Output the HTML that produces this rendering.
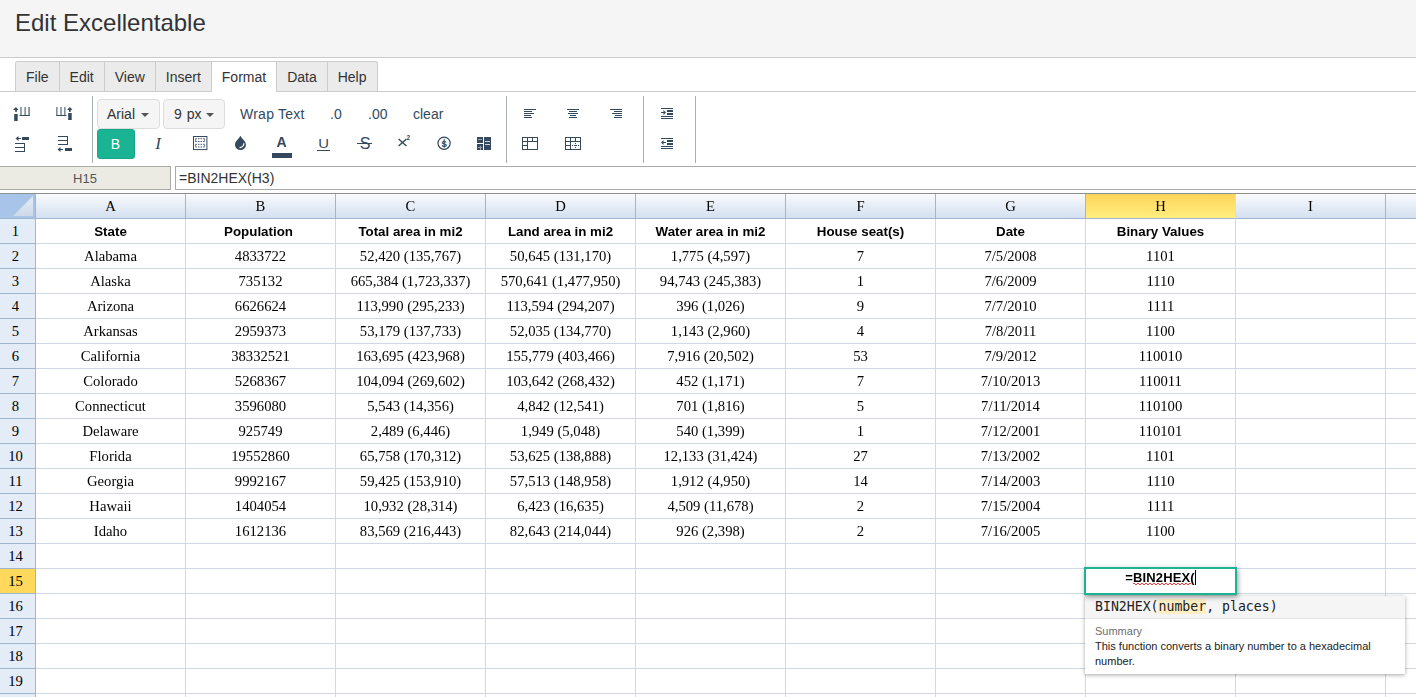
<!DOCTYPE html>
<html><head><meta charset="utf-8"><title>Edit Excellentable</title>
<style>
*{box-sizing:border-box;margin:0;padding:0}
html,body{width:1416px;height:697px;overflow:hidden;background:#fff}
body{font-family:"Liberation Sans",Arial,sans-serif;font-size:14px;color:#333;position:relative}
.abs{position:absolute}
#hdr{position:absolute;left:0;top:0;width:1416px;height:58px;background:#f5f5f5;border-bottom:1px solid #ccc}
#hdr h1{position:absolute;left:15px;top:9px;font-size:24px;font-weight:normal;line-height:28px;color:#333}
#tabs{position:absolute;left:15px;top:61px;height:30px;display:flex;border-top:1px solid #ccc;border-right:1px solid #ccc;border-radius:3px 3px 0 0;background:#ebebeb;overflow:hidden}
#tabs div{height:30px;line-height:30px;padding:0 10px;border-left:1px solid #ccc;font-size:14px;color:#333;white-space:nowrap}
#tabs div.act{background:#fff;height:31px}
#tbline{position:absolute;left:0;top:91px;width:1416px;height:1px;background:#ccc}
.sep{position:absolute;top:96px;width:1px;height:67px;background:#a9aeb5}
.btn{position:absolute;height:30px;border:1px solid #ddd;border-radius:4px;background:#f5f5f5;font-size:14px;line-height:27px;color:#333}
.caret{position:absolute;width:0;height:0;border-left:4px solid transparent;border-right:4px solid transparent;border-top:4px solid #555}
.tt{position:absolute;font-size:14px;line-height:16px;color:#34495e;white-space:nowrap}
svg.ic{position:absolute;overflow:visible}
#namebox{position:absolute;left:-1px;top:166px;width:172px;height:24px;background:#ebebe4;border:1px solid #aaa;font-size:13px;line-height:24px;text-align:center;color:#555}
#fx{position:absolute;left:175px;top:166px;width:1260px;height:24px;background:#fff;border:1px solid #aaa;font-size:14px;line-height:22px;padding-left:3px;color:#333}
/* grid */
#grid{position:absolute;left:0;top:193px;width:1416px;height:504px;overflow:hidden;opacity:.999;font-family:"Liberation Serif","Times New Roman",serif}
#gtop{position:absolute;left:0;top:193px;width:1416px;height:1px;background:#8e8e8e}
.corner{position:absolute;left:0;top:194px;width:36px;height:25px;background:#a9c4e9;border-right:1px solid #9eb6ce;border-bottom:1px solid #9eb6ce}
.ch{position:absolute;top:194px;width:150px;height:25px;border-right:1px solid #9eb6ce;border-bottom:1px solid #9eb6ce;background:linear-gradient(#f9fbfd,#d4dff0);font-size:14.67px;line-height:24px;text-align:center;color:#000}
.ch.sel{background:linear-gradient(#ffd45c,#ffee80);border-right-color:#e6dfba}
.rh{position:absolute;left:0;width:36px;height:25px;border-right:1px solid #9eb6ce;border-bottom:1px solid #9eb6ce;background:#e4ecf7;font-size:14.67px;line-height:24px;text-align:center;color:#000;padding-right:4px}
.rh.sel{background:#ffd85c}
.hl{position:absolute;left:36px;width:1380px;height:1px;background:#d0d7e5}
.vl{position:absolute;top:219px;width:1px;height:500px;background:#d0d7e5}
.c{position:absolute;width:149px;height:24px;font-size:14.67px;line-height:24px;text-align:center;color:#000;white-space:nowrap}
.c.b{font-family:"Liberation Sans",Arial,sans-serif;font-weight:bold;font-size:13.33px;line-height:26px}
#edit{z-index:5;position:absolute;left:1084px;top:567px;width:153px;height:28px;border:2px solid #1ab394;background:#fff;box-shadow:1px 2px 5px rgba(0,0,0,.4);font-family:"Liberation Sans",Arial,sans-serif;font-weight:bold;font-size:13px;line-height:18px;text-align:center;color:#000}
#tipsh{position:absolute;left:1085px;top:596px;width:320px;height:78px;box-shadow:0 1px 4px rgba(0,0,0,.35)}
#tip{position:absolute;left:1085px;top:596px;width:320px;height:78px;background:#fff;font-family:"Liberation Sans",Arial,sans-serif}
#tip .sig{height:23px;background:#f5f5f5;border-bottom:1px solid #e5e5e5;font-family:"DejaVu Sans Mono","Liberation Mono",monospace;font-size:13.200px;line-height:22px;padding-left:10px;color:#222;white-space:pre;position:relative}
#tip .sig i{position:absolute;left:73px;top:3px;width:48px;height:15px;background:#fdefc3}
#tip .sig b{position:relative;font-weight:normal}
#tip .sum{position:absolute;left:10px;top:28px;font-size:11px;line-height:14px;color:#6e6e6e}
#tip .desc{position:absolute;left:10px;top:43px;width:300px;font-size:11px;line-height:15px;color:#222}
</style></head>
<body>
<div id="grid"><div style="position:absolute;left:0;top:-193px;width:1416px;height:697px">
<div id="gtop"></div>
<div class="corner"><svg width="35" height="24"><defs><linearGradient id="tg" x1="0" y1="0" x2="0" y2="1"><stop offset="0" stop-color="#e3ebf6"/><stop offset="1" stop-color="#cfd9e8"/></linearGradient></defs><polygon points="13,22 33,22 33,2" fill="url(#tg)"/></svg></div>
<div class="ch" style="left:36px">A</div>
<div class="ch" style="left:186px">B</div>
<div class="ch" style="left:336px">C</div>
<div class="ch" style="left:486px">D</div>
<div class="ch" style="left:636px">E</div>
<div class="ch" style="left:786px">F</div>
<div class="ch" style="left:936px">G</div>
<div class="ch sel" style="left:1086px">H</div>
<div class="ch" style="left:1236px">I</div>
<div class="ch" style="left:1386px">J</div>
<div class="rh" style="top:219px">1</div>
<div class="rh" style="top:244px">2</div>
<div class="rh" style="top:269px">3</div>
<div class="rh" style="top:294px">4</div>
<div class="rh" style="top:319px">5</div>
<div class="rh" style="top:344px">6</div>
<div class="rh" style="top:369px">7</div>
<div class="rh" style="top:394px">8</div>
<div class="rh" style="top:419px">9</div>
<div class="rh" style="top:444px">10</div>
<div class="rh" style="top:469px">11</div>
<div class="rh" style="top:494px">12</div>
<div class="rh" style="top:519px">13</div>
<div class="rh" style="top:544px">14</div>
<div class="rh sel" style="top:569px">15</div>
<div class="rh" style="top:594px">16</div>
<div class="rh" style="top:619px">17</div>
<div class="rh" style="top:644px">18</div>
<div class="rh" style="top:669px">19</div>
<div class="rh" style="top:694px">20</div>
<div class="hl" style="top:243px"></div>
<div class="hl" style="top:268px"></div>
<div class="hl" style="top:293px"></div>
<div class="hl" style="top:318px"></div>
<div class="hl" style="top:343px"></div>
<div class="hl" style="top:368px"></div>
<div class="hl" style="top:393px"></div>
<div class="hl" style="top:418px"></div>
<div class="hl" style="top:443px"></div>
<div class="hl" style="top:468px"></div>
<div class="hl" style="top:493px"></div>
<div class="hl" style="top:518px"></div>
<div class="hl" style="top:543px"></div>
<div class="hl" style="top:568px"></div>
<div class="hl" style="top:593px"></div>
<div class="hl" style="top:618px"></div>
<div class="hl" style="top:643px"></div>
<div class="hl" style="top:668px"></div>
<div class="hl" style="top:693px"></div>
<div class="hl" style="top:718px"></div>
<div class="vl" style="left:185px"></div>
<div class="vl" style="left:335px"></div>
<div class="vl" style="left:485px"></div>
<div class="vl" style="left:635px"></div>
<div class="vl" style="left:785px"></div>
<div class="vl" style="left:935px"></div>
<div class="vl" style="left:1085px"></div>
<div class="vl" style="left:1235px"></div>
<div class="vl" style="left:1385px"></div>
<div class="vl" style="left:1535px"></div>
<div class="c b" style="left:36px;top:219px">State</div>
<div class="c b" style="left:186px;top:219px;padding-right:4px">Population</div>
<div class="c b" style="left:336px;top:219px">Total area in mi2</div>
<div class="c b" style="left:486px;top:219px">Land area in mi2</div>
<div class="c b" style="left:636px;top:219px">Water area in mi2</div>
<div class="c b" style="left:786px;top:219px">House seat(s)</div>
<div class="c b" style="left:936px;top:219px">Date</div>
<div class="c b" style="left:1086px;top:219px">Binary Values</div>
<div class="c" style="left:36px;top:244px">Alabama</div>
<div class="c" style="left:186px;top:244px">4833722</div>
<div class="c" style="left:336px;top:244px">52,420 (135,767)</div>
<div class="c" style="left:486px;top:244px">50,645 (131,170)</div>
<div class="c" style="left:636px;top:244px">1,775 (4,597)</div>
<div class="c" style="left:786px;top:244px">7</div>
<div class="c" style="left:936px;top:244px">7/5/2008</div>
<div class="c" style="left:1086px;top:244px">1101</div>
<div class="c" style="left:36px;top:269px">Alaska</div>
<div class="c" style="left:186px;top:269px">735132</div>
<div class="c" style="left:336px;top:269px">665,384 (1,723,337)</div>
<div class="c" style="left:486px;top:269px">570,641 (1,477,950)</div>
<div class="c" style="left:636px;top:269px">94,743 (245,383)</div>
<div class="c" style="left:786px;top:269px">1</div>
<div class="c" style="left:936px;top:269px">7/6/2009</div>
<div class="c" style="left:1086px;top:269px">1110</div>
<div class="c" style="left:36px;top:294px">Arizona</div>
<div class="c" style="left:186px;top:294px">6626624</div>
<div class="c" style="left:336px;top:294px">113,990 (295,233)</div>
<div class="c" style="left:486px;top:294px">113,594 (294,207)</div>
<div class="c" style="left:636px;top:294px">396 (1,026)</div>
<div class="c" style="left:786px;top:294px">9</div>
<div class="c" style="left:936px;top:294px">7/7/2010</div>
<div class="c" style="left:1086px;top:294px">1111</div>
<div class="c" style="left:36px;top:319px">Arkansas</div>
<div class="c" style="left:186px;top:319px">2959373</div>
<div class="c" style="left:336px;top:319px">53,179 (137,733)</div>
<div class="c" style="left:486px;top:319px">52,035 (134,770)</div>
<div class="c" style="left:636px;top:319px">1,143 (2,960)</div>
<div class="c" style="left:786px;top:319px">4</div>
<div class="c" style="left:936px;top:319px">7/8/2011</div>
<div class="c" style="left:1086px;top:319px">1100</div>
<div class="c" style="left:36px;top:344px">California</div>
<div class="c" style="left:186px;top:344px">38332521</div>
<div class="c" style="left:336px;top:344px">163,695 (423,968)</div>
<div class="c" style="left:486px;top:344px">155,779 (403,466)</div>
<div class="c" style="left:636px;top:344px">7,916 (20,502)</div>
<div class="c" style="left:786px;top:344px">53</div>
<div class="c" style="left:936px;top:344px">7/9/2012</div>
<div class="c" style="left:1086px;top:344px">110010</div>
<div class="c" style="left:36px;top:369px">Colorado</div>
<div class="c" style="left:186px;top:369px">5268367</div>
<div class="c" style="left:336px;top:369px">104,094 (269,602)</div>
<div class="c" style="left:486px;top:369px">103,642 (268,432)</div>
<div class="c" style="left:636px;top:369px">452 (1,171)</div>
<div class="c" style="left:786px;top:369px">7</div>
<div class="c" style="left:936px;top:369px">7/10/2013</div>
<div class="c" style="left:1086px;top:369px">110011</div>
<div class="c" style="left:36px;top:394px">Connecticut</div>
<div class="c" style="left:186px;top:394px">3596080</div>
<div class="c" style="left:336px;top:394px">5,543 (14,356)</div>
<div class="c" style="left:486px;top:394px">4,842 (12,541)</div>
<div class="c" style="left:636px;top:394px">701 (1,816)</div>
<div class="c" style="left:786px;top:394px">5</div>
<div class="c" style="left:936px;top:394px">7/11/2014</div>
<div class="c" style="left:1086px;top:394px">110100</div>
<div class="c" style="left:36px;top:419px">Delaware</div>
<div class="c" style="left:186px;top:419px">925749</div>
<div class="c" style="left:336px;top:419px">2,489 (6,446)</div>
<div class="c" style="left:486px;top:419px">1,949 (5,048)</div>
<div class="c" style="left:636px;top:419px">540 (1,399)</div>
<div class="c" style="left:786px;top:419px">1</div>
<div class="c" style="left:936px;top:419px">7/12/2001</div>
<div class="c" style="left:1086px;top:419px">110101</div>
<div class="c" style="left:36px;top:444px">Florida</div>
<div class="c" style="left:186px;top:444px">19552860</div>
<div class="c" style="left:336px;top:444px">65,758 (170,312)</div>
<div class="c" style="left:486px;top:444px">53,625 (138,888)</div>
<div class="c" style="left:636px;top:444px">12,133 (31,424)</div>
<div class="c" style="left:786px;top:444px">27</div>
<div class="c" style="left:936px;top:444px">7/13/2002</div>
<div class="c" style="left:1086px;top:444px">1101</div>
<div class="c" style="left:36px;top:469px">Georgia</div>
<div class="c" style="left:186px;top:469px">9992167</div>
<div class="c" style="left:336px;top:469px">59,425 (153,910)</div>
<div class="c" style="left:486px;top:469px">57,513 (148,958)</div>
<div class="c" style="left:636px;top:469px">1,912 (4,950)</div>
<div class="c" style="left:786px;top:469px">14</div>
<div class="c" style="left:936px;top:469px">7/14/2003</div>
<div class="c" style="left:1086px;top:469px">1110</div>
<div class="c" style="left:36px;top:494px">Hawaii</div>
<div class="c" style="left:186px;top:494px">1404054</div>
<div class="c" style="left:336px;top:494px">10,932 (28,314)</div>
<div class="c" style="left:486px;top:494px">6,423 (16,635)</div>
<div class="c" style="left:636px;top:494px">4,509 (11,678)</div>
<div class="c" style="left:786px;top:494px">2</div>
<div class="c" style="left:936px;top:494px">7/15/2004</div>
<div class="c" style="left:1086px;top:494px">1111</div>
<div class="c" style="left:36px;top:519px">Idaho</div>
<div class="c" style="left:186px;top:519px">1612136</div>
<div class="c" style="left:336px;top:519px">83,569 (216,443)</div>
<div class="c" style="left:486px;top:519px">82,643 (214,044)</div>
<div class="c" style="left:636px;top:519px">926 (2,398)</div>
<div class="c" style="left:786px;top:519px">2</div>
<div class="c" style="left:936px;top:519px">7/16/2005</div>
<div class="c" style="left:1086px;top:519px">1100</div>
</div></div>

<div id="hdr"><h1>Edit Excellentable</h1></div>
<div id="tabs"><div>File</div><div>Edit</div><div>View</div><div>Insert</div><div class="act">Format</div><div>Data</div><div>Help</div></div>
<div id="tbline"></div>
<div class="abs" style="left:212px;top:91px;width:64px;height:1px;background:#fff"></div>

<!-- toolbar -->
<div id="toolbar">
<div class="sep" style="left:92px"></div>
<div class="sep" style="left:506px"></div>
<div class="sep" style="left:643px"></div>
<div class="sep" style="left:695px"></div>

<!-- row/col insert icons -->
<svg class="ic" style="left:0;top:0" width="92" height="170" fill="#34495e">
 <!-- icon1 -->
 <rect x="14.200" y="114" width="3.500" height="7"/>
 <rect x="15.200" y="109.500" width="1.700" height="2.400"/>
 <polygon points="13,110 15.900,106.900 18.600,110"/>
 <rect x="20.500" y="107" width="1" height="8.500"/><rect x="24.600" y="107" width="1" height="8.500"/><rect x="28.500" y="107" width="1.100" height="8.500"/><rect x="19.500" y="115" width="10.300" height="1"/>
</svg>
<svg class="ic" style="left:0;top:0" width="92" height="170" fill="#34495e">
 <!-- icon2 -->
 <rect x="56.400" y="107" width="1" height="8.500"/><rect x="60.500" y="107" width="1" height="8.500"/><rect x="64.400" y="107" width="1" height="8.500"/><rect x="56.200" y="115" width="10.200" height="1"/>
 <rect x="68.200" y="113" width="3.500" height="7"/>
 <rect x="69" y="109.500" width="1.700" height="2.400"/>
 <polygon points="67,110 69.800,106.900 72.500,110"/>
 <!-- icon3 -->
 <rect x="22" y="137" width="7" height="3"/>
 <rect x="17" y="138" width="4" height="1"/>
 <polygon points="15.5,138.5 18.5,136 18.5,141" shape-rendering="auto"/>
 <rect x="15" y="143" width="10" height="1"/><rect x="15" y="147" width="10" height="1"/><rect x="15" y="151" width="10" height="1"/><rect x="24" y="143" width="1" height="9"/>
 <!-- icon4 -->
 <rect x="58" y="136" width="10" height="1"/><rect x="58" y="140" width="10" height="1"/><rect x="58" y="144" width="10" height="1"/><rect x="67" y="136" width="1" height="9"/>
 <rect x="65" y="148" width="7" height="3"/>
 <rect x="59" y="149" width="4" height="1"/>
 <polygon points="57.5,149.5 60.5,147 60.5,152" shape-rendering="auto"/>
</svg>

<!-- font buttons -->
<div class="btn" style="left:97px;top:99px;width:63px"><span style="position:absolute;left:9px;top:1px">Arial</span><span class="caret" style="left:43px;top:13px"></span></div>
<div class="btn" style="left:163px;top:99px;width:62px"><span style="position:absolute;left:10px;top:1px;word-spacing:1px">9 px</span><span class="caret" style="left:42px;top:13px"></span></div>
<div class="tt" style="left:240px;top:106px;letter-spacing:.25px">Wrap Text</div>
<div class="tt" style="left:330px;top:106px">.0</div>
<div class="tt" style="left:368px;top:106px">.00</div>
<div class="tt" style="left:413px;top:106px">clear</div>

<!-- second row -->
<div class="abs" style="left:97px;top:129px;width:38px;height:30px;background:#1ab394;border:1px solid #18a689;border-radius:3px;color:#fff;font-size:14px;line-height:28px;text-align:center;padding-right:1px">B</div>
<div class="abs" style="left:150px;top:134px;width:16px;height:20px;font-family:'Liberation Serif',serif;font-style:italic;font-size:17px;line-height:20px;text-align:center;color:#34495e">I</div>
<!-- borders icon -->
<svg class="ic" style="left:193px;top:136px" width="15" height="14" fill="none" stroke="#34495e">
 <rect x="0.5" y="0.5" width="13.400" height="13.100"/>
 <g stroke-dasharray="1.600 1" stroke-opacity=".9">
 <line x1="2.300" y1="2.700" x2="12" y2="2.700"/><line x1="2.300" y1="5.500" x2="12" y2="5.500"/>
 <line x1="2.300" y1="8.300" x2="12" y2="8.300"/><line x1="2.300" y1="10.900" x2="12" y2="10.900"/>
 </g>
 <g stroke-opacity=".75"><line x1="2.600" y1="3.200" x2="2.600" y2="5"/><line x1="11.600" y1="3.200" x2="11.600" y2="5"/><line x1="2.600" y1="8.800" x2="2.600" y2="10.400"/><line x1="11.600" y1="8.800" x2="11.600" y2="10.400"/></g>
</svg>
<!-- drop -->
<svg class="ic" style="left:234px;top:135px" width="13" height="16" viewBox="0 0 13 16">
 <path d="M6.400 0.700 C7.700 3.700 12 6 12 9.700 A5.500 5.300 0 0 1 1 9.700 C1 6 5.100 3.700 6.400 0.700 Z" fill="#34495e"/>
 <path d="M9.900 8.300 A4 4 0 0 1 5.600 12.500" fill="none" stroke="#fff" stroke-width="1.300"/>
</svg>
<!-- font color A -->
<div class="abs" style="left:271px;top:133px;width:21px;height:18px;font-weight:bold;font-size:14px;line-height:18px;text-align:center;color:#34495e">A</div>
<div class="abs" style="left:272px;top:153px;width:20px;height:5px;background:#34495e"></div>
<!-- underline -->
<div class="abs" style="left:316px;top:134px;width:15px;height:18px;font-size:13.500px;line-height:19px;text-align:center;color:#34495e;transform:scaleX(1.1)">U</div>
<div class="abs" style="left:317px;top:150px;width:13px;height:1px;background:#34495e"></div>
<!-- strike -->
<div class="abs" style="left:357px;top:134px;width:16px;height:20px;font-size:16px;line-height:20px;text-align:center;color:#34495e">S</div>
<div class="abs" style="left:357px;top:143px;width:15px;height:1px;background:#34495e"></div>
<!-- superscript -->
<svg class="ic" style="left:397px;top:134px" width="16" height="16"><path d="M1.600 5 L9.400 12 M9.400 5 L1.600 12" stroke="#34495e" stroke-width="1.400" fill="none"/><text x="9.600" y="5.800" font-family="Liberation Sans, Arial, sans-serif" font-weight="bold" font-size="6.500" fill="#34495e">2</text></svg>
<!-- dollar -->
<svg class="ic" style="left:437px;top:136px" width="14" height="14" viewBox="0 0 14 14"><circle cx="7.100" cy="7.200" r="6.100" fill="none" stroke="#34495e" stroke-width="1.200"/><text x="7.100" y="10.600" text-anchor="middle" font-family="Liberation Sans, Arial, sans-serif" font-weight="bold" font-size="9.500" fill="#34495e">$</text><rect x="6.700" y="2.800" width="0.900" height="8.800" fill="#34495e"/></svg>
<!-- calc -->
<svg class="ic" style="left:477px;top:137px" width="14" height="13" shape-rendering="crispEdges" fill="#34495e">
 <rect x="0" y="0" width="6" height="6" rx="1"/><rect x="0" y="7" width="6" height="6" rx="1"/><rect x="7" y="0" width="7" height="13" rx="1"/>
 <rect x="1" y="2" width="4" height="1" fill="#9aa4b0"/><rect x="1" y="10" width="4" height="1" fill="#9aa4b0"/><rect x="2.5" y="8.500" width="1" height="4" fill="#9aa4b0"/>
 <rect x="8" y="4" width="5" height="1" fill="#cfd5db"/><rect x="8" y="7" width="5" height="1" fill="#cfd5db"/>
</svg>
<!-- align left/center/right -->
<svg class="ic" style="left:0;top:0" width="700" height="170" shape-rendering="crispEdges" fill="#34495e">
 <rect x="524" y="109" width="12" height="1"/><rect x="524" y="111" width="8" height="1"/><rect x="524" y="113" width="10" height="1"/><rect x="524" y="115" width="7" height="1"/><rect x="524" y="117" width="8" height="1"/>
 <rect x="567" y="109" width="12" height="1"/><rect x="569" y="111" width="8" height="1"/><rect x="568" y="113" width="10" height="1"/><rect x="570" y="115" width="6" height="1"/><rect x="569" y="117" width="8" height="1"/>
 <rect x="610" y="109" width="12" height="1"/><rect x="614" y="111" width="8" height="1"/><rect x="612" y="113" width="10" height="1"/><rect x="615" y="115" width="7" height="1"/><rect x="614" y="117" width="8" height="1"/>
 <!-- merge icons -->
 <g fill="none" stroke="#34495e">
  <rect x="522.500" y="137.500" width="15" height="12"/>
  <line x1="523" y1="141.500" x2="538" y2="141.500"/><line x1="527.500" y1="138" x2="527.500" y2="150"/><line x1="532.500" y1="138" x2="532.500" y2="141"/>
  <line x1="523" y1="145.500" x2="527" y2="145.500"/>
  <rect x="565.500" y="137.500" width="15" height="12"/>
  <line x1="566" y1="141.500" x2="581" y2="141.500"/><line x1="566" y1="145.500" x2="571" y2="145.500"/><line x1="572" y1="145.500" x2="580" y2="145.500" stroke-dasharray="1 1"/>
  <line x1="570.500" y1="138" x2="570.500" y2="150"/><line x1="575.500" y1="138" x2="575.500" y2="141"/>
  <line x1="575.500" y1="143" x2="575.500" y2="149" stroke-dasharray="1 1"/>
 </g>
 <!-- indent -->
 <rect x="661" y="108" width="12" height="1"/><rect x="667" y="110" width="6" height="2"/><rect x="667" y="113" width="6" height="2"/><rect x="661" y="116" width="12" height="1"/><rect x="661" y="118" width="12" height="1"/>
 <rect x="661" y="112" width="3" height="1"/><polygon points="663.500,110 666,112.500 663.500,115" shape-rendering="auto"/>
 <!-- outdent -->
 <rect x="661" y="138" width="12" height="1"/><rect x="667" y="140" width="6" height="2"/><rect x="667" y="143" width="6" height="2"/><rect x="661" y="146" width="12" height="1"/><rect x="661" y="148" width="12" height="1"/>
 <rect x="663" y="142" width="3" height="1"/><polygon points="663.500,140 661,142.500 663.500,145" shape-rendering="auto"/>
</svg>

</div>

<div id="edit"><span style="position:relative;top:0px;letter-spacing:.12px">=<span style="position:relative">BIN2HEX<svg style="position:absolute;left:0;bottom:0px;overflow:visible" width="58" height="2"><defs><pattern id="sq" width="4" height="2" patternUnits="userSpaceOnUse"><rect x="0" y="0" width="2" height="1" fill="#f21c1c"/><rect x="2" y="1" width="2" height="1" fill="#f21c1c"/></pattern></defs><rect width="58" height="2" fill="url(#sq)" opacity=".85"/></svg></span>(</span><span style="display:inline-block;width:1px;height:15px;background:#000;vertical-align:-3px"></span></div>
<div id="tipsh"></div><div id="tip"><div class="sig"><i></i><b>BIN2HEX(number, places)</b></div><div class="sum">Summary</div><div class="desc">This function converts a binary number to a hexadecimal number.</div></div>

<div id="namebox">H15</div>
<div id="fx">=BIN2HEX(H3)</div>
</body></html>
